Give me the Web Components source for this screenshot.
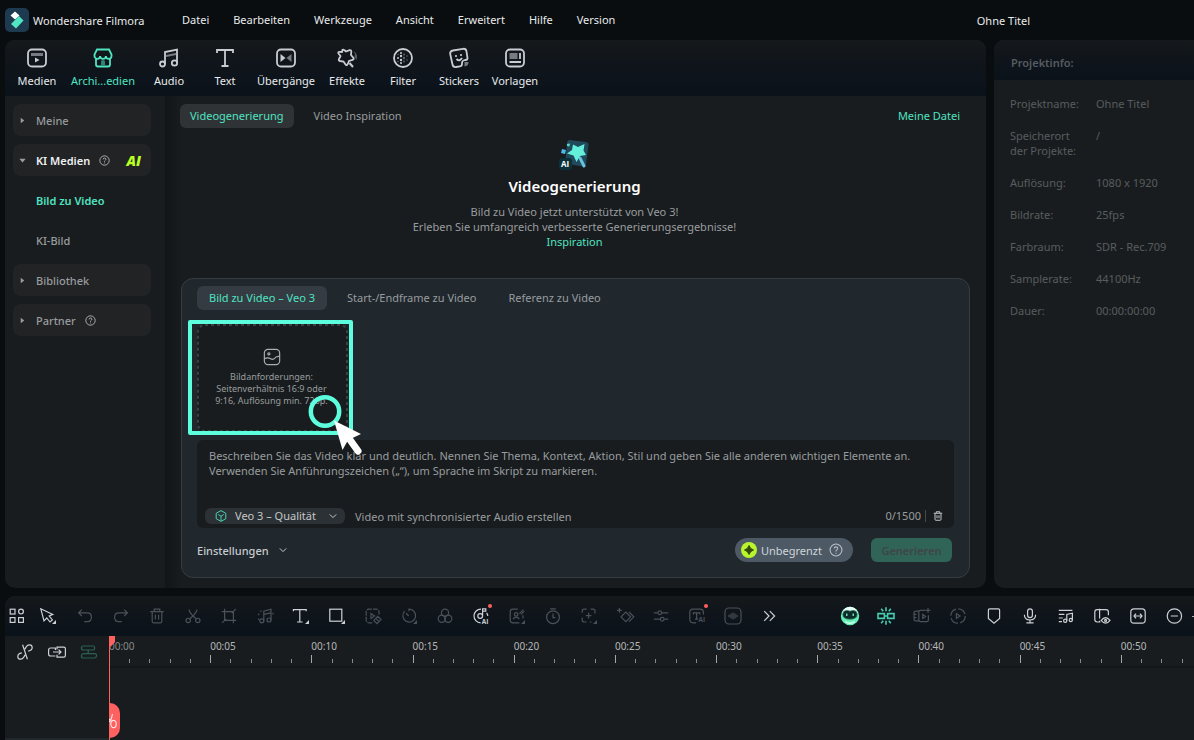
<!DOCTYPE html>
<html lang="de">
<head>
<meta charset="utf-8">
<title>Wondershare Filmora</title>
<style>
  html { background: #090d0f; }
  body {
    margin: 0;
    min-height: 100vh;
    overflow: hidden;
    font: 11px/15px "Noto Sans", "Open Sans", sans-serif;
    color: #e8eaec;
    --accent: #50e3c2;
    --muted: #989c9f;
    --faint: #575c5f;
    --panel: #191c1e;
    --bar: linear-gradient(#15191b, #10151b 40%, #0a121a);
  }
</style>
</head>
<body>
<fm-app></fm-app>
<script>
const base = `
  * { box-sizing: border-box; }
  button, select, textarea { font: inherit; color: inherit; background: none; border: 0; padding: 0; margin: 0; outline: 0; }
  button { cursor: pointer; }
  a { text-decoration: none; color: var(--accent); }
`;
function define(name, css, html, setup) {
  const template = document.createElement('template');
  template.innerHTML = `<style>${base}${css}</style>${html}`;
  customElements.define(name, class extends HTMLElement {
    constructor() {
      super();
      this.attachShadow({ mode: 'open' }).append(template.content.cloneNode(true));
    }
    connectedCallback() { if (setup) setup(this, this.shadowRoot); }
  });
}

/* Line icons on a 20 by 20 grid, drawn in the current colour. */
const corner = '<path d="M20 15v5h-5z" fill="currentColor" stroke="none"/>';
const icons = {
  media: '<rect x="1" y="1.500" width="18" height="17" rx="4"/><rect x="4" y="5" width="12" height="3" fill="#777c84" stroke="none"/><path d="M8 9.500v5l4.500-2.500z" fill="currentColor" stroke="none"/>',
  store: '<path d="M3 10v6.500q0 2 2 2h10q2 0 2-2V10M4 1.500h12l2.500 5v1.500a2.800 2.800 0 0 1-5.600 0a2.900 2.900 0 0 1-5.800 0a2.800 2.800 0 0 1-5.600 0V6.500z"/><path d="M8 18v-4.500q0-1.500 2-1.500t2 1.500V18z" fill="#2c8576" stroke="none"/>',
  music: '<circle cx="3.500" cy="16" r="2.500"/><circle cx="15.500" cy="15" r="2.700"/><path d="M6 16V4l12-2.500V15"/><path d="M7 8l10-2" stroke="#777c84"/>',
  text: '<path d="M2 5V2h16v3M10 2v16M6.500 18h7"/>',
  transition: '<rect x="1" y="1.500" width="18" height="17" rx="4"/><path d="M4.500 6v8l5-4z" fill="currentColor" stroke="none"/><path d="M15.500 6v8l-5-4z" fill="#777c84" stroke="none"/>',
  effects: '<path d="M5.500 1.800q1-.5 2 .5l1.500 1.200 3.500-1.300q2-.5 1.800 1.500L14 7l2.300 2.800q1 1.500-.8 2L12 13l-1.500 3.500q-1 1.500-2 0L6.500 13.500 3 13q-1.800-.3-1-2L3.500 8 1.500 5.500Q.8 4 2.500 3.800L5 4z"/><path d="M12.500 15l3.500 4" stroke-width="2"/><path d="M16.500 3q5 3 3 9l-2-3 .5-3z" fill="#555a60" stroke="none"/>',
  filter: '<circle cx="10" cy="10" r="9"/><g fill="currentColor" stroke="none"><circle cx="8" cy="5" r="1"/><circle cx="8" cy="8" r="1.200"/><circle cx="8" cy="12" r="1.200"/><circle cx="8" cy="15" r="1"/><circle cx="5" cy="10" r="1"/><g fill="#5a6068"><circle cx="11" cy="6.500" r="1"/><circle cx="11" cy="10" r="1.200"/><circle cx="11" cy="13.500" r="1"/><circle cx="14" cy="8" r=".8"/><circle cx="14" cy="12" r=".8"/><circle cx="5" cy="6.500" r=".8"/><circle cx="5" cy="13.500" r=".8"/></g></g>',
  sticker: '<path d="M4 2.500L14 .8q3-.3 3.500 2.500L18.500 10q0 2-2 2l-2 .5q-1.500.5-1.500 2.500v1q0 2-2 2.300l-4 .7q-3 .3-3.500-2.500L1.200 6Q.8 3 4 2.500z"/><path d="M7.500 11q3 3 5.500-1"/><circle cx="7" cy="8" r="1.100" fill="currentColor" stroke="none"/><circle cx="12" cy="7" r="1.100" fill="currentColor" stroke="none"/><path d="M15.500 14h4q0 4-4 4.500z" fill="#777c84" stroke="none"/>',
  template: '<rect x="1" y="1.500" width="18" height="17" rx="4"/><rect x="4.500" y="5" width="8" height="6" fill="#777c84" stroke="none"/><path d="M15 5v6M4.500 14H16"/>',
  help: '<circle cx="10" cy="10" r="8.500"/><path d="M7.500 8q0-2.500 2.500-2.500T12.500 8Q12.500 9 10 11v1.200M10 13.800v1.400"/>',
  right: '<path d="M5 2l10 8-10 8z" fill="currentColor" stroke="none"/>',
  down: '<path d="M1 5l9 11 9-11z" fill="currentColor" stroke="none"/>',
  chevron: '<path d="M2 6l8 8 8-8"/>',
  image: '<rect x="1.500" y="1.500" width="17" height="17" rx="4"/><circle cx="6.500" cy="6.500" r="1.200"/><path d="M1.500 12q4-2 7 0t6-2l4-1"/>',
  cube: '<path d="M10 1l8 4.500v9L10 19l-8-4.500v-9zM10 18v-7.500L5.500 7.500M10 10.500l4.500-3"/>',
  trash: '<path d="M1.500 4.500h17M6.500 4V1.500h7V4M4 5v12q0 1.500 1.500 1.500h9q1.500 0 1.500-1.500V5M8 8.500v6M12 8.500v6"/>',
  grid: '<rect x="1.500" y="1.500" width="6" height="6"/><rect x="12" y="1.500" width="6" height="6" rx="3"/><rect x="1.500" y="12" width="6" height="6"/><rect x="12" y="12" width="6" height="6"/>',
  pointer: '<path d="M1 1l4 15 3.500-3.500 4 5 3-2.500-4-5 4.500-2z"/>' + corner,
  undo: '<path d="M6 2L2 6l4 4M2 6h11q5 0 5 5.500T13 17H9"/>',
  redo: '<path d="M14 2l4 4-4 4M18 6H7q-5 0-5 5.500T7 17h4"/>',
  cut: '<circle cx="4" cy="15.500" r="2.700"/><circle cx="16" cy="15.500" r="2.700"/><path d="M5 2q1 5 9 11.500M15 2q-1 5-9 11.500"/>',
  crop: '<path d="M4.500 1v14.500H19M1 4.500h14.500V19M6.500 13.500l-5 5M13.500 6.500L18.500 1"/>',
  musicdots: '<circle cx="6" cy="16" r="2.500"/><circle cx="15" cy="15" r="2.500"/><path d="M8.500 16V4l9-2.500V15M8.500 8l9-2M2 7v2M2 13v2M20 6v2M5 3v2"/>',
  textc: '<path d="M.5 4V2h16v2M8.500 2v15M5 17.500h7"/>' + corner,
  square: '<rect x="1" y="1.500" width="15" height="15"/>' + corner,
  mask: '<path d="M9 18.500H5q-3.500 0-3.500-3.500V5q0-3.500 3.500-3.500h9q3.500 0 3.500 3.500v3" stroke-dasharray="6 1.500"/><path d="M7.500 7v6l4.500-3z"/><path d="M11 15.500l5-5 4 4-5 5zM13.500 13l4 4"/>',
  speed: '<path d="M4.500 4A8 8 0 1 0 10 1.500V4M9.500 10L6.500 6.500"/>' + corner,
  color: '<circle cx="10" cy="6" r="4.500"/><circle cx="6" cy="13.500" r="4.500"/><circle cx="14" cy="13.500" r="4.500"/>',
  discai: '<path d="M10 1.500A8.500 8.500 0 1 0 9.500 18.500M12 10a3 3 0 1 1-3-3q3 0 3 3V1h4v3h-4M17 6q1.500 2 1.500 4"/><text x="11" y="20">AI</text>',
  portrait: '<path d="M11 1.500H5q-3.500 0-3.500 3.500v10q0 3.500 3.500 3.500h8M17.500 9v4"/><circle cx="9" cy="8" r="2.200"/><path d="M5 14q4-5 8 0M13 7l5-5M15 8l4-4"/>' + corner,
  timer: '<circle cx="10" cy="11.500" r="8"/><path d="M6.500 1h7M10 7v5h3"/>',
  focus: '<path d="M1.500 6V4q0-2.500 2.500-2.500h3M12 1.500h3q2.500 0 2.500 2.500v3M1.500 12v3q0 2.500 2.500 2.500h3M13 17.500h-2M9.500 6v7M6 9.500h7"/>' + corner,
  keyframe: '<path d="M5 11l6-6 6 6-6 6zM15 5l6 6-6 6M3 0v6M0 3h6"/>',
  sliders: '<path d="M1 6h5M11 6h8M1 14h8M14 14h5"/><circle cx="8.500" cy="6" r="2.300"/><circle cx="11.500" cy="14" r="2.300"/>',
  textai: '<path d="M9 18.500H5q-4 0-4-4v-9Q1 1.500 5 1.500h9q4 0 4 4V8M5.500 8V6h8v2M9.500 6v8M7.500 14h4"/><text x="12" y="18">AI</text>',
  wave: '<rect x="0" y="0" width="20" height="20" rx="5"/><path d="M5 8.500v3M7.500 7v6M10 5.500v9M12.500 7v6M15 8.500v3"/>',
  more: '<path d="M4 4l6 6-6 6M11 4l6 6-6 6"/>',
  bot: '<circle cx="10" cy="10" r="11.500" fill="#63efb5" stroke="none"/><path d="M0 6Q3-1.500 10-1.500T20 6z" fill="#eafff6" stroke="none"/><path d="M1 8q0-5 5-5 2 0 4 1 2-1 4-1 5 0 5 5 0 6-9 6T1 8z" fill="#0d2b28" stroke="#357a69" stroke-width="1"/><path d="M6 7v3M14 7v3" stroke="#8dffdc" stroke-width="1.500"/><path d="M4 17q6 4 12 0" stroke="#d0ffe9" stroke-width="2"/>',
  snap: '<g stroke-width="2"><path d="M0 7h8v6H0zM12 7h8v6h-8zM8 10h4M10-1v5M10 16v5M4 1l2.500 3M16 1l-2.500 3M4 19l2.500-3M16 19l-2.500-3"/></g>',
  camera: '<path d="M14 3H8Q6 3 6 5v10q0 2 2 2h8q2 0 2-2V9M6 4H3Q0 4 0 6v8q0 2 2 2h4M17.500 0v6M14.500 3h6M11 8v5l3.500-2.500zM0 8h3M0 12h3"/>',
  render: '<circle cx="10" cy="10" r="9" stroke-dasharray="11.300 2.837"/><path d="M8 7v6l4.500-3z"/>',
  shield: '<path d="M4.500 1h11q1.500 0 1.500 1.500V13l-7 6-7-6V2.500Q3 1 4.500 1z"/>',
  mic: '<rect x="7" y="1" width="6" height="11" rx="3"/><path d="M3 8.500q0 6.500 7 6.500t7-6.500M10 15v3M5.500 18.500h9"/>',
  playlist: '<path d="M1 3h17M1 8h7M1 12.500h5M1 17h4"/><circle cx="9" cy="16" r="2"/><circle cx="16" cy="15" r="2"/><path d="M11 16V8l7-1.500V15"/>',
  preview: '<path d="M8 17.500H4q-3 0-3-3V5q0-3 3-3h11q3 0 3 3v4M7 1v12M7 16v2"/><path d="M9 15.500q5.500-7 11 0-5.500 7-11 0z"/><circle cx="14.500" cy="15.500" r="1.200"/>',
  fit: '<rect x="1" y="1" width="18" height="18" rx="4"/><path d="M5 10h10M7.500 7L5 10l2.500 3M12.500 7l2.500 3-2.500 3"/>',
  minus: '<circle cx="10.500" cy="10" r="9"/><path d="M6 10h9"/>',
  unlink: '<path d="M10 6.500Q12 1 15.500 1T19 4.500Q19 8 14 9M10 13.500Q8 19 4.500 19T1 15.500Q1 12 6 11M7 1l6 18"/>',
  link: '<path d="M8 15H2q-2.500 0-2.500-2.500v-5Q-.5 5 2 5h6v2.500M10 7V4h8.500q2 0 2 2v8.500q0 2-2 2H10v-3M5 10h10M12 7l3 3-3 3"/>',
  tracks: '<path d="M3 2.500h12q2 0 2 2v1q0 2-2 2H3q-2.500 0-2.500-2.500T3 2.500zM3 12h14q2.500 0 2.500 2.500T17 17.500H3q-2.500 0-2.500-2.500T3 12zM9 6.500v6"/>',
};
define('fm-icon', `
  :host { display: inline-block; flex: none; width: 20px; height: 20px; }
  svg { display: block; width: 100%; height: 100%; overflow: visible; fill: none; stroke: currentColor; stroke-width: var(--stroke, 1.5); }
  text { font: 700 8px "Open Sans", sans-serif; fill: currentColor; stroke: none; }
`, '<svg viewBox="0 0 20 20" aria-hidden="true"></svg>', (host, root) => {
  root.querySelector('svg').innerHTML = icons[host.getAttribute('name')];
});

define('fm-titlebar', `
  :host { display: grid; grid-template-columns: auto 1fr auto; align-items: center; height: 40px; padding: 0 164px 0 5px; }
  .brand { display: flex; align-items: center; gap: 4px; width: 177px; }
  .brand svg { display: block; flex: none; }
  nav { display: flex; gap: 24px; padding-bottom: 2px; }
`, `
  <div class="brand">
    <svg width="24" height="24" viewBox="0 0 24 24" aria-hidden="true"><rect width="24" height="24" rx="5" fill="#1d3a50"/><path d="M14 8l4.500 4.500-7.500 8-5-4.500z" fill="#52e5c4"/><path d="M10 3.500l4.500 4-4.500 4-4.500-4z" fill="#fff"/></svg>
    <span>Wondershare Filmora</span>
  </div>
  <nav aria-label="Hauptmenü"><button>Datei</button><button>Bearbeiten</button><button>Werkzeuge</button><button>Ansicht</button><button>Erweitert</button><button>Hilfe</button><button>Version</button></nav>
  <span>Ohne Titel</span>
`);

define('fm-nav-tab', `
  :host { display: block; width: 56px; }
  :host([wide]) { width: 66px; }
  :host([widest]) { width: 76px; }
  :host([active]) { color: var(--accent); }
  button { display: flex; flex-direction: column; align-items: center; gap: 5px; width: 100%; padding-top: 8px; white-space: nowrap; }
  fm-icon { color: #c8ccd3; --stroke: 1.8; }
  :host([active]) fm-icon { color: inherit; }
`, '<button><fm-icon></fm-icon><slot></slot></button>', (host, root) => {
  const icon = document.createElement('fm-icon');
  icon.setAttribute('name', host.getAttribute('icon'));
  root.querySelector('fm-icon').replaceWith(icon);
});

define('fm-side-item', `
  :host { display: block; color: var(--muted); font-weight: 500; }
  :host([open]) { color: #eef0f2; font-weight: 600; }
  :host([active]) { color: var(--accent); font-weight: 600; }
  button { display: flex; align-items: center; width: 100%; height: 32px; padding: 0 10px 0 23px; border-radius: 8px; text-align: left; }
  :host([group]) button { background: #212325; padding-left: 6px; gap: 10px; }
  fm-icon { width: 7px; height: 7px; color: #9a9ea2; display: none; }
  :host([group]:not([open])) .closed, :host([open]) .opened { display: block; }
  .label { display: flex; flex: 1; align-items: center; gap: 9px; }
`, `<button><fm-icon class="closed" name="right"></fm-icon><fm-icon class="opened" name="down"></fm-icon><span class="label"><slot></slot></span><slot name="badge"></slot></button>`);

define('fm-sidebar', `
  :host { display: block; width: 160px; padding: 8px 14px 8px 8px; }
  nav { display: grid; gap: 8px; }
  .help { width: 11px; height: 11px; color: #c3c7ca; }
  .ai { color: #b8ff22; font: italic 800 14px/15px "Open Sans", sans-serif; }
`, `
  <nav aria-label="Medien">
    <fm-side-item group>Meine</fm-side-item>
    <fm-side-item group open>KI Medien<fm-icon class="help" name="help"></fm-icon><span slot="badge" class="ai">AI</span></fm-side-item>
    <fm-side-item active>Bild zu Video</fm-side-item>
    <fm-side-item>KI-Bild</fm-side-item>
    <fm-side-item group>Bibliothek</fm-side-item>
    <fm-side-item group>Partner<fm-icon class="help" name="help"></fm-icon></fm-side-item>
  </nav>
`);

define('fm-tab', `
  :host { display: block; color: var(--muted); }
  button { height: 24px; padding: 0 var(--tab-pad, 10px) 2px; border-radius: 6px; white-space: nowrap; }
  :host([active]) { color: var(--accent); }
  :host([active]) button { background: var(--tab-bg, #2f3336); }
`, '<button><slot></slot></button>');

define('fm-upload', `
  :host { display: block; position: relative; width: 151px; }
  button { display: flex; flex-direction: column; align-items: center; gap: 5px; width: 100%; height: 108px; padding: 24px 14px 0 12px; border-radius: 8px; background: var(--panel); color: var(--muted); font-size: 9px; line-height: 12px; white-space: nowrap; }
  fm-icon { width: 18px; height: 18px; --stroke: 1.3; color: #a9adb0; }
  .dashes { position: absolute; left: 0; top: 0; width: 100%; height: 100%; pointer-events: none; }
  .dashes rect { x: 1px; y: 1px; width: calc(100% - 2px); height: calc(100% - 2px); rx: 7px; fill: none; stroke: #3a4044; stroke-width: 2; stroke-dasharray: 3 3; }
  .frame { position: absolute; inset: -4px -5px -3px -9px; border: 4px solid #5cfedd; border-radius: 2px; pointer-events: none; }
  .cursor { position: absolute; left: 108px; top: 68px; z-index: 1; pointer-events: none; }
`, `
  <button><fm-icon name="image"></fm-icon><span>Bildanforderungen:<br>Seitenverhältnis 16:9 oder<br>9:16, Auflösung min. 720p.</span></button>
  <svg class="dashes" aria-hidden="true"><rect/></svg>
  <div class="frame"></div>
  <svg class="cursor" width="60" height="66" viewBox="0 0 60 66" aria-hidden="true"><circle cx="20" cy="19.500" r="14.200" fill="none" stroke="#5cfedd" stroke-width="4.500"/><path d="M29 28.500L56 42l-8.500 4-5.500 4-4.500 8z" fill="#fff"/><path d="M43 45l10 14" stroke="#fff" stroke-width="7" stroke-linecap="round"/></svg>
`);

define('fm-prompt', `
  :host { display: block; padding: 8px 8px 4px; border-radius: 6px; background: var(--panel); color: var(--muted); }
  textarea { display: block; width: 100%; height: 60px; padding: 0 4px; resize: none; overflow: hidden; }
  textarea::placeholder { color: #989c9f; opacity: 1; }
  .bar { display: flex; align-items: center; height: 16px; }
  .model { display: grid; align-items: center; width: 140px; height: 16px; margin-right: 10px; border-radius: 6px; background: #2b3134; color: #c3c7ca; }
  .model > * { grid-area: 1 / 1; }
  .model select { appearance: none; width: 100%; height: 16px; padding: 0 24px 0 30px; line-height: 16px; }
  .cube { width: 12px; height: 12px; margin-left: 10px; color: var(--accent); pointer-events: none; }
  .arrow { width: 8px; height: 8px; justify-self: end; margin-right: 8px; --stroke: 2.500; pointer-events: none; }
  .count { margin-left: auto; padding-right: 4px; border-right: 1px solid #44494c; line-height: 12px; }
  .clear { display: flex; margin: 0 3px 0 7px; color: #c3c7ca; }
  .clear fm-icon { width: 10px; height: 10px; --stroke: 2; }
`, `
  <textarea aria-label="Beschreibung" placeholder="Beschreiben Sie das Video klar und deutlich. Nennen Sie Thema, Kontext, Aktion, Stil und geben Sie alle anderen wichtigen Elemente an.&#10;Verwenden Sie Anführungszeichen („“), um Sprache im Skript zu markieren."></textarea>
  <div class="bar">
    <span class="model"><select aria-label="Modell"><option>Veo 3 – Qualität</option></select><fm-icon class="cube" name="cube"></fm-icon><fm-icon class="arrow" name="chevron"></fm-icon></span>
    <span>Video mit synchronisierter Audio erstellen</span>
    <span class="count">0/1500</span>
    <button class="clear" aria-label="Leeren"><fm-icon name="trash"></fm-icon></button>
  </div>
`);

define('fm-generator', `
  :host { display: block; padding: 8px 16px 10px; background: linear-gradient(90deg, #121517, transparent 16px); }
  .tabs { display: flex; align-items: center; gap: 10px; margin-left: -1px; }
  .tabs a { margin: 0 10px 2px auto; }
  .hero { padding: 12px 2px 29px 0; text-align: center; color: var(--muted); }
  .hero svg { display: block; margin: 0 auto 4px; }
  .hero text { font: 700 8px "Open Sans", sans-serif; fill: #fff; }
  h1 { margin: 0 0 6px; font-size: 15px; line-height: 24px; font-weight: 600; color: #fff; }
  p { margin: 0; }
  .card { display: grid; padding: 7px 15px 15px; border: 1px solid #373c40; border-radius: 12px; background: #20272d; }
  .modes { display: flex; gap: 8px; --tab-pad: 12px; --tab-bg: #343b42; }
  fm-upload { margin-top: 14px; }
  fm-prompt { margin-top: 8px; }
  .actions { display: flex; align-items: center; margin-top: 10px; height: 24px; }
  .settings { display: flex; align-items: center; gap: 10px; color: #c8ccd0; font-weight: 500; }
  .settings fm-icon { width: 8px; height: 8px; --stroke: 2.500; }
  .credits { display: flex; align-items: center; gap: 4px; height: 24px; margin: 0 18px 0 auto; padding: 0 10px 0 6px; border-radius: 12px; background: #4d5a66; color: #d0d5da; }
  .credits fm-icon { width: 14px; height: 14px; margin-left: 3px; --stroke: 1.500; color: #b9c0c7; }
  .go { height: 24px; width: 81px; margin-right: 2px; border-radius: 6px; background: #306457; color: #3f4547; font-weight: 600; }
`, `
  <div class="tabs"><fm-tab active>Videogenerierung</fm-tab><fm-tab>Video Inspiration</fm-tab><a href="#dateien">Meine Datei</a></div>
  <div class="hero">
    <svg width="32" height="30" viewBox="0 0 32 30" aria-hidden="true"><path d="M10 0l17 2q3 .5 2.500 3L27 24q-.5 3-3 2.500L9 24Q6 23 6.500 20L8 3q.5-3 2-3z" fill="#204a5c"/><path d="M21 18l4 8" stroke="#69c3df" stroke-width="3" stroke-linecap="round"/><path d="M14 4.500l5 2.500 6.500-3-1 6.500 2.500 4.500-6 1-3.500 6-3-6.500L8 13.500l5-3.500z" fill="#63efd9"/><path d="M3 9l4 1-1 4-4-1z" fill="#4fb8ef"/><path d="M8 4l3-.5-.5 3-2.500-.5z" fill="#55d9c4"/><rect y="18" width="13" height="12" rx="3" fill="#0c3039"/><text x="2" y="27">AI</text></svg>
    <h1>Videogenerierung</h1>
    <p>Bild zu Video jetzt unterstützt von Veo 3!<br>Erleben Sie umfangreich verbesserte Generierungsergebnisse!</p>
    <a href="#inspiration">Inspiration</a>
  </div>
  <div class="card">
    <div class="modes"><fm-tab active>Bild zu Video – Veo 3</fm-tab><fm-tab>Start-/Endframe zu Video</fm-tab><fm-tab>Referenz zu Video</fm-tab></div>
    <fm-upload></fm-upload>
    <fm-prompt></fm-prompt>
    <div class="actions">
      <button class="settings">Einstellungen<fm-icon name="chevron"></fm-icon></button>
      <button class="credits"><svg width="16" height="16" viewBox="0 0 16 16" aria-hidden="true"><circle cx="8" cy="8" r="8" fill="#b8f52c"/><path d="M8 3.500Q9 7 12.500 8 9 9 8 12.500 7 9 3.500 8 7 7 8 3.500z" fill="#33480a" stroke="#33480a"/></svg>Unbegrenzt<fm-icon name="help"></fm-icon></button>
      <button class="go" disabled>Generieren</button>
    </div>
  </div>
`);

define('fm-workspace', `
  :host { display: block; border-radius: 10px; overflow: hidden; background: var(--panel); }
  nav { display: flex; height: 56px; padding-left: 4px; background: var(--bar); }
  .body { display: grid; grid-template-columns: auto 1fr; }
`, `
  <nav aria-label="Bibliothek">
    <fm-nav-tab icon="media">Medien</fm-nav-tab><fm-nav-tab icon="store" widest active>Archi...edien</fm-nav-tab><fm-nav-tab icon="music">Audio</fm-nav-tab><fm-nav-tab icon="text">Text</fm-nav-tab><fm-nav-tab icon="transition" wide>Übergänge</fm-nav-tab><fm-nav-tab icon="effects">Effekte</fm-nav-tab><fm-nav-tab icon="filter">Filter</fm-nav-tab><fm-nav-tab icon="sticker">Stickers</fm-nav-tab><fm-nav-tab icon="template">Vorlagen</fm-nav-tab>
  </nav>
  <div class="body"><fm-sidebar></fm-sidebar><fm-generator></fm-generator></div>
`);

define('fm-project-info', `
  :host { display: block; border-radius: 10px 0 0 10px; overflow: hidden; background: var(--panel); color: var(--faint); }
  h2 { margin: 0; height: 40px; padding: 15px 17px 0; font-size: inherit; line-height: 15px; font-weight: 600; background: var(--bar); color: #565c60; }
  dl { display: grid; grid-template-columns: 70px 1fr; gap: 17px 16px; margin: 0; padding: 16px; white-space: nowrap; }
  dt, dd { margin: 0; }
`, `
  <h2>Projektinfo:</h2>
  <dl><dt>Projektname:</dt><dd>Ohne Titel</dd><dt>Speicherort<br>der Projekte:</dt><dd>/</dd><dt>Auflösung:</dt><dd>1080 x 1920</dd><dt>Bildrate:</dt><dd>25fps</dd><dt>Farbraum:</dt><dd>SDR - Rec.709</dd><dt>Samplerate:</dt><dd>44100Hz</dd><dt>Dauer:</dt><dd>00:00:00:00</dd></dl>
`);

define('fm-tool', `
  :host { display: block; width: 36px; color: #4b5159; }
  :host([on]) { color: #cdd1d6; }
  :host([green]) { color: #45cdb0; }
  :host([badge]) button::after { content: ""; position: absolute; left: 25px; top: 8px; width: 4px; height: 4px; border-radius: 50%; background: #ff5f5f; }
  button { position: relative; display: grid; place-items: center; width: 100%; height: 40px; }
  fm-icon { width: 16px; height: 16px; }
`, '<button><fm-icon></fm-icon></button>', (host, root) => {
  const icon = document.createElement('fm-icon');
  icon.setAttribute('name', host.getAttribute('icon'));
  root.querySelector('fm-icon').replaceWith(icon);
  root.querySelector('button').setAttribute('aria-label', host.getAttribute('icon'));
});

define('fm-ruler', `
  :host { display: block; overflow: hidden; height: 32px; border-bottom: 2px solid #13171a; }
  ol { display: grid; grid-template-columns: repeat(11, 1fr); list-style: none; margin: 0 -28px 0 -1px; padding: 4px 0 0; font-size: 10px; line-height: 13px; color: #b4b7b9; }
  li:first-child { color: #85898b; }
  .ticks { display: grid; grid-template-columns: repeat(5, 1fr); align-items: end; height: 10px; }
  i { height: 4px; border-left: 1px solid #878b8e; }
  i:first-child { height: 8px; border-color: #a5a8aa; }
  li:first-child i:first-child { visibility: hidden; }
`, '<ol></ol>', (host, root) => {
  root.querySelector('ol').innerHTML = Array.from({ length: 11 }, (_, n) =>
    `<li>00:${String(n * 5).padStart(2, '0')}<div class="ticks"><i></i><i></i><i></i><i></i><i></i></div></li>`).join('');
});

define('fm-timeline', `
  :host { display: flex; flex-direction: column; border-radius: 10px 0 0 0; overflow: hidden; background: var(--panel); }
  .tools { display: flex; flex: none; height: 40px; background: var(--bar); }
  .tools fm-tool:first-child { width: 24px; }
  .tools fm-tool:nth-child(2) { width: 38px; }
  .view { display: flex; align-items: center; margin-left: auto; }
  .view > i { width: 2px; height: 1px; background: #aeb2b6; }
  .view fm-tool:first-child, .view fm-tool:nth-child(2) { width: 36px; }
  .body { display: grid; flex: 1; grid-template-columns: 104px 1fr; }
  .head { display: flex; align-items: flex-start; border-bottom: 2px solid #20282c; }
  .head fm-tool { width: 32px; margin-top: -4px; }
  .head fm-tool:first-child { margin-left: 4px; }
  .head .tracks { color: #296153; }
  .lane { position: relative; border-left: 1px solid #ff6060; }
  .marker { position: absolute; left: -1px; top: 0; }
  .split { position: absolute; left: -1px; bottom: 2px; display: grid; width: 11px; height: 35px; border-radius: 0 10px 10px 0; background: #ff6060; place-items: center start; }
`, `
  <div class="tools">
    <fm-tool icon="grid" on></fm-tool><fm-tool icon="pointer" on></fm-tool><fm-tool icon="undo"></fm-tool><fm-tool icon="redo"></fm-tool><fm-tool icon="trash"></fm-tool><fm-tool icon="cut"></fm-tool><fm-tool icon="crop"></fm-tool><fm-tool icon="musicdots"></fm-tool><fm-tool icon="textc" on></fm-tool><fm-tool icon="square" on></fm-tool><fm-tool icon="mask"></fm-tool><fm-tool icon="speed"></fm-tool><fm-tool icon="color"></fm-tool><fm-tool icon="discai" on badge></fm-tool><fm-tool icon="portrait"></fm-tool><fm-tool icon="timer"></fm-tool><fm-tool icon="focus"></fm-tool><fm-tool icon="keyframe"></fm-tool><fm-tool icon="sliders"></fm-tool><fm-tool icon="textai" badge></fm-tool><fm-tool icon="wave"></fm-tool><fm-tool icon="more" on></fm-tool>
    <div class="view"><fm-tool icon="bot"></fm-tool><fm-tool icon="snap" green></fm-tool><fm-tool icon="camera"></fm-tool><fm-tool icon="render"></fm-tool><fm-tool icon="shield" on></fm-tool><fm-tool icon="mic" on></fm-tool><fm-tool icon="playlist" on></fm-tool><fm-tool icon="preview" on></fm-tool><fm-tool icon="fit" on></fm-tool><fm-tool icon="minus" on></fm-tool><i></i></div>
  </div>
  <div class="body">
    <div class="head"><fm-tool icon="unlink" on></fm-tool><fm-tool icon="link" on></fm-tool><fm-tool class="tracks" icon="tracks"></fm-tool></div>
    <div class="lane">
      <fm-ruler></fm-ruler>
      <svg class="marker" width="6" height="11" viewBox="0 0 6 11" aria-hidden="true"><path d="M0 0h6v6L2 10.500H0z" fill="#ff6060"/></svg>
      <div class="split"><svg width="10" height="18" viewBox="0 0 10 18" aria-hidden="true"><path d="M3.500 2Q3 7 0 10" fill="none" stroke="#ffe3e3" stroke-width="1.200"/><path d="M0 7q2 1 2.500 3" fill="none" stroke="#ffe3e3"/><ellipse cx="4.500" cy="12" rx="2.700" ry="3.700" fill="none" stroke="#ffe3e3" stroke-width="1.200"/></svg></div>
    </div>
  </div>
`);

define('fm-app', `
  :host { display: flex; flex-direction: column; min-height: 100vh; }
  main { display: grid; grid-template-columns: 1fr 200px; gap: 8px; padding-left: 5px; }
  fm-timeline { flex: 1; margin: 8px 0 0 5px; }
`, `
  <fm-titlebar></fm-titlebar>
  <main><fm-workspace></fm-workspace><fm-project-info></fm-project-info></main>
  <fm-timeline></fm-timeline>
`);
</script>
</body>
</html>
